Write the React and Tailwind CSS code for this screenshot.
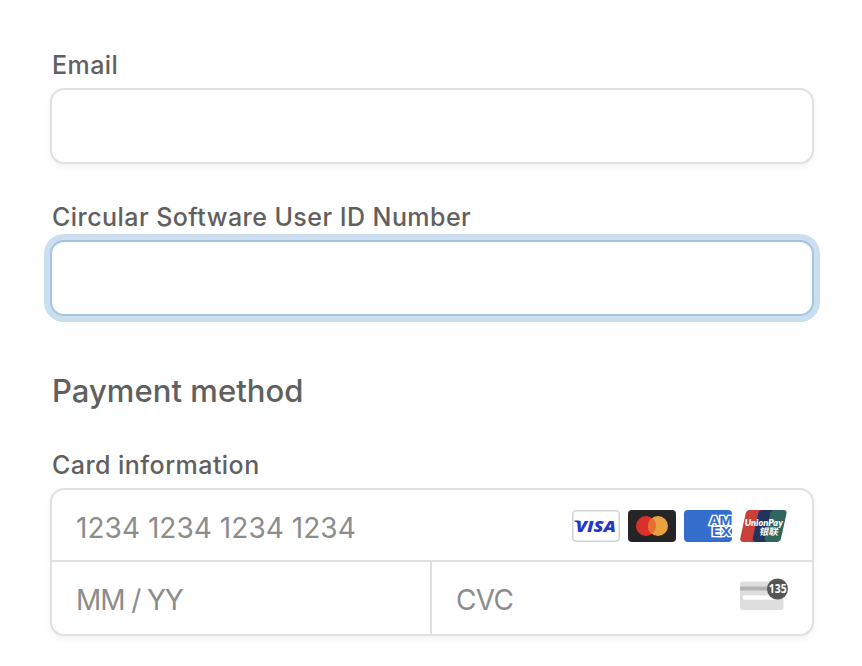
const labelClass = 'block h-8 text-[25px] leading-8 font-medium text-[#606060] pl-0.5 tracking-[0.45px] whitespace-nowrap';
const inputClass = 'w-full bg-transparent text-[28px] text-[#5c5c5c] placeholder:text-[#8c8c8c] outline-none px-6';

function VisaIcon() {
  return (
    <svg width="48" height="32" viewBox="0 0 48 32" role="img" aria-label="Visa">
      <rect x="0.75" y="0.75" width="46.5" height="30.5" rx="3.5" fill="#fff" stroke="#d2d3d5" strokeWidth="1.5" />
      <text x="3.8" y="22.2" textLength="40.2" lengthAdjust="spacingAndGlyphs" fill="#2337c6" fontFamily="'Open Sans', sans-serif" fontSize="16.2" fontWeight="800" fontStyle="italic">VISA</text>
      <path d="M2.4 10.6h5l.6 2.4H5.6c-.9-.8-2-1.1-3.2-1.4z" fill="#2337c6" />
    </svg>
  );
}

function MastercardIcon() {
  return (
    <svg width="48" height="32" viewBox="0 0 48 32" role="img" aria-label="Mastercard">
      <rect width="48" height="32" rx="4" fill="#252525" />
      <circle cx="18" cy="16" r="10" fill="#d9302b" />
      <circle cx="30" cy="16" r="10" fill="#e8a23f" />
      <path d="M24 8a10 10 0 0 1 0 16 10 10 0 0 1 0-16z" fill="#ec6b2e" />
    </svg>
  );
}

function AmexIcon() {
  return (
    <svg width="48" height="32" viewBox="0 0 48 32" role="img" aria-label="American Express">
      <rect width="48" height="32" rx="4" fill="#356dcc" />
      <g fill="#356dcc" stroke="#fff" strokeWidth="2.6" paintOrder="stroke" fontFamily="Inter, sans-serif" fontSize="11.5" fontWeight="700">
        <text x="25.3" y="15" textLength="23" lengthAdjust="spacingAndGlyphs">AM</text>
        <text x="28" y="26.2" textLength="19.5" lengthAdjust="spacingAndGlyphs">EX</text>
      </g>
    </svg>
  );
}

function UnionPayIcon() {
  return (
    <svg width="48" height="32" viewBox="0 0 48 32" role="img" aria-label="UnionPay">
      <path d="M9.5 0H23L16 32H3C1 32-.2 30.3.2 28.4L5.7 3.2C6.1 1.4 7.7 0 9.5 0z" fill="#c9403b" />
      <path d="M22 0h13l-7 32H15.5c-2 0-3.2-1.7-2.8-3.6l5.6-25.2C18.7 1.4 20.2 0 22 0z" fill="#20345f" />
      <path d="M34 0h9.8c2 0 3.1 1.5 2.7 3.4L41 28.6c-.5 2-2.1 3.4-4 3.4H27.4c-1.9 0-3-1.7-2.6-3.6l5.5-25.2C30.8 1.4 32.2 0 34 0z" fill="#31665f" />
      <text x="4.8" y="16.4" textLength="38" lengthAdjust="spacingAndGlyphs" fill="#fff" fontFamily="Lato, sans-serif" fontSize="10" fontWeight="800" fontStyle="italic">UnionPay</text>
      <text transform="translate(19 25.4) skewX(-10)" textLength="19" lengthAdjust="spacingAndGlyphs" fill="#fff" fontFamily="'Noto Sans CJK SC', sans-serif" fontSize="9.2" fontWeight="700">银联</text>
    </svg>
  );
}

function CvcIcon() {
  return (
    <svg width="48" height="32" viewBox="0 0 48 32" aria-hidden="true">
      <rect y="3.5" width="43.5" height="28.5" rx="3" fill="#dedede" />
      <path d="M0 8.5h43.5v4H0z" fill="#b3b3b3" />
      <rect x="3" y="17.5" width="34" height="4.2" rx="1" fill="#fff" />
      <circle cx="37.5" cy="11" r="10.5" fill="#555" />
      <text x="28.8" y="15.2" textLength="17.8" lengthAdjust="spacingAndGlyphs" fill="#fff" fontFamily="'Open Sans', sans-serif" fontSize="12" fontWeight="700">135</text>
    </svg>
  );
}

export default function App() {
  return (
    <form className="min-h-screen bg-white pl-[50px] pr-12 pt-[49px] font-['Inter','Liberation_Sans',sans-serif]">
      <div>
        <label htmlFor="email" className={labelClass}>Email</label>
        <div className="mt-[7px] flex h-[76px] rounded-[14px] border-2 border-[#e0e0e0] bg-white shadow-[0_3px_6px_rgba(0,0,0,0.05)]">
          <input id="email" type="email" className={inputClass} />
        </div>
      </div>

      <div className="mt-[37px]">
        <label htmlFor="user-id" className={labelClass}>Circular Software User ID Number</label>
        <div className="mt-[7px] flex h-[76px] rounded-[14px] border-2 border-[#a3c4e2] bg-white shadow-[0_0_0_6px_#ccdff0]">
          <input id="user-id" type="text" className={inputClass} />
        </div>
      </div>

      <h2 className="mt-[55px] h-10 pl-0.5 text-[31px] leading-10 font-medium tracking-[0.05px] text-[#606060]">Payment method</h2>

      <div className="mt-[38px]">
        <label htmlFor="card-number" className={labelClass}>Card information</label>
        <div className="mt-[7px] h-[148px] rounded-[14px] border-2 border-[#e0e0e0] bg-white shadow-[0_3px_6px_rgba(0,0,0,0.05)]">
          <div className="flex h-[72px] items-center border-b-2 border-[#e0e0e0] pr-6">
            <input id="card-number" type="text" placeholder="1234 1234 1234 1234" className={`${inputClass} pt-1.5 tracking-[0.04px]`} />
            <div className="flex shrink-0 gap-2 pt-0.5">
              <VisaIcon />
              <MastercardIcon />
              <AmexIcon />
              <UnionPayIcon />
            </div>
          </div>
          <div className="flex h-[72px]">
            <input type="text" placeholder="MM / YY" aria-label="Expiration date" className={`${inputClass} max-w-[380px] shrink-0 border-r-2 border-[#e0e0e0] pt-[3px] tracking-[-1.1px]`} />
            <div className="flex grow items-center pr-6">
              <input type="text" placeholder="CVC" aria-label="CVC" className={`${inputClass} pt-[3px] tracking-[-0.7px]`} />
              <div className="shrink-0 pb-2">
                <CvcIcon />
              </div>
            </div>
          </div>
        </div>
      </div>
    </form>
  );
}
